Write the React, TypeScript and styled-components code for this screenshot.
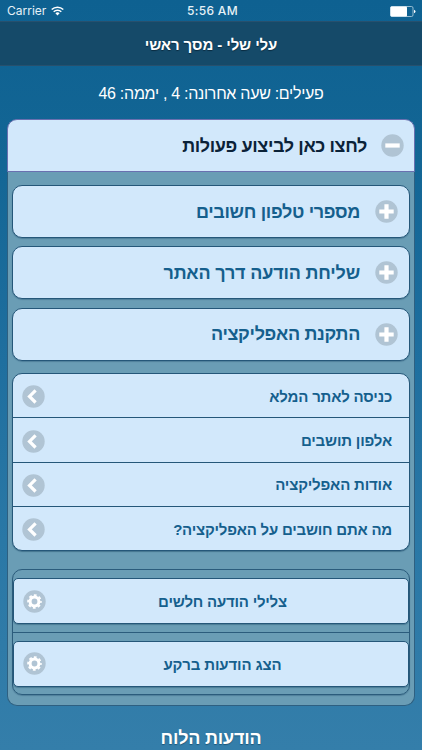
import React from "react";
import styled, { createGlobalStyle } from "styled-components";

const GlobalStyle = createGlobalStyle`
  *, *::before, *::after { box-sizing: border-box; }
  html, body { margin: 0; padding: 0; }
  body { overflow: hidden; }
`;

const Screen = styled.div`
  width: 422px;
  height: 750px;
  overflow: hidden;
  direction: rtl;
  display: flex;
  flex-direction: column;
  font-family: "Liberation Sans", "Open Sans", sans-serif;
  color: #fff;
  background: linear-gradient(#0e6191 0%, #136695 22%, #1f6f9f 48%, #2a78a6 72%, #347eaa 100%);
`;

const StatusBar = styled.div`
  direction: ltr;
  height: 21px;
  flex: none;
  display: grid;
  grid-template-columns: 1fr auto 1fr;
  align-items: center;
  padding: 1px 6px 0 7px;
  font: 12px/20px Inter, sans-serif;
  color: #e6f1f7;
`;

const Carrier = styled.span`
  display: flex;
  align-items: center;
  gap: 5px;
`;

const Clock = styled.span`
  padding-left: 2px;
  font-weight: 500;
  letter-spacing: 0.3px;
`;

const BatterySlot = styled.span`
  display: flex;
  justify-content: flex-end;
`;

const TitleBar = styled.header`
  height: 45px;
  flex: none;
  display: flex;
  align-items: center;
  justify-content: center;
  padding-top: 2px;
  background: #154a69;
  border-top: 1px solid #27506d;
  border-bottom: 1px solid #27506d;
  text-shadow: 0 1px 1px #0a2b40;
`;

const Text = styled.span<{ $size: number; $weight?: number; $spacing?: number }>`
  font-size: ${(p) => p.$size}px;
  font-weight: ${(p) => p.$weight ?? 700};
  letter-spacing: ${(p) => p.$spacing ?? 0}px;
  line-height: 24px;
  white-space: nowrap;
`;

const Activity = styled.div`
  height: 53px;
  flex: none;
  display: flex;
  align-items: center;
  justify-content: center;
  padding-top: 2px;
`;

const Panel = styled.section`
  height: 587px;
  flex: none;
  margin: 0 7px;
  display: flex;
  flex-direction: column;
`;

const PanelHeader = styled.div`
  height: 53px;
  flex: none;
  display: flex;
  align-items: center;
  gap: 14px;
  padding: 0 10px;
  color: #0b2238;
  background: #d2e8fb;
  border: 1px solid #6a70b0;
  border-radius: 10px 10px 0 0;
`;

const PanelBody = styled.div`
  flex: 1;
  display: flex;
  flex-direction: column;
  padding: 13px 4px 0;
  background: #6a9db5;
  border: 1px solid #2e6081;
  border-top: 0;
  border-radius: 0 0 10px 10px;
`;

const Collapsible = styled.div`
  height: 53px;
  flex: none;
  display: flex;
  align-items: center;
  gap: 15px;
  margin-bottom: 8.4px;
  padding: 0 11px;
  color: #155f8d;
  background: #d2e8fb;
  border: 1px solid #255779;
  border-radius: 10px;
  box-shadow: 0 1px 1px rgba(30, 75, 105, 0.35);
`;

const List = styled.div`
  height: 178px;
  flex: none;
  margin-top: 4px;
  display: flex;
  flex-direction: column;
  color: #155f8d;
  background: #d2e8fb;
  border: 1px solid #255779;
  border-radius: 10px;
  box-shadow: 0 1px 1px rgba(30, 75, 105, 0.5);
`;

const ListRow = styled.div`
  flex: 1;
  display: flex;
  align-items: center;
  justify-content: space-between;
  padding: 2px 17px 0 9px;
  & + & { border-top: 1px solid #255779; }
`;

const IconSlot = styled.span`
  display: flex;
  flex: none;
`;

const ButtonGroup = styled.div`
  height: 126px;
  flex: none;
  margin-top: 18px;
  display: flex;
  flex-direction: column;
  border: 1px solid #2b5c7c;
  border-radius: 10px;
  box-shadow: 0 1px 1px rgba(30, 75, 105, 0.35);
`;

const ButtonCell = styled.div`
  flex: 1;
  padding-top: 8px;
  & + & { border-top: 1px solid #2b5c7c; }
`;

const Button = styled.div`
  height: 46px;
  display: grid;
  grid-template-columns: 1fr 23px;
  align-items: center;
  justify-items: center;
  padding: 0 9px;
  color: #155f8d;
  background: #d2e8fb;
  border: 1px solid #255779;
  border-radius: 5px;
  box-shadow: 0 1px 1px rgba(30, 75, 105, 0.4);
`;

const ButtonLabel = styled(Text)`
  padding-top: 2px;
`;

const Footer = styled.div`
  height: 44px;
  flex: none;
  display: flex;
  justify-content: center;
  padding-top: 20px;
  text-shadow: 0 1px 1px #1d5679;
`;

function Disc({ kind }: { kind: "plus" | "minus" | "back" | "gear" }) {
  return (
    <svg width="23" height="23" viewBox="0 0 23 23">
      <circle cx="11.5" cy="11.5" r="11.2" fill="#b0c4d4" />
      {kind === "minus" && <path d="M4.3 11.5h14.4" stroke="#fff" strokeWidth="4.2" />}
      {kind === "plus" && <path d="M4.3 11.5h14.4M11.5 4.3v14.4" stroke="#fff" strokeWidth="4.2" />}
      {kind === "back" && <path d="M13.6 5.3l-6.1 6.1 6.1 6.1" fill="none" stroke="#fff" strokeWidth="3.2" />}
      {kind === "gear" && (
        <g fill="none" stroke="#fff">
          <circle cx="11.5" cy="11.5" r="4.4" strokeWidth="3" />
          <circle cx="11.5" cy="11.5" r="6.4" strokeWidth="1.8" strokeDasharray="2.8 2.2265" strokeDashoffset="1.4" />
        </g>
      )}
    </svg>
  );
}

const collapsibles = [
  { label: "מספרי טלפון חשובים", spacing: -0.33 },
  { label: "שליחת הודעה דרך האתר", spacing: -0.18 },
  { label: "התקנת האפליקציה", spacing: -0.33 },
];

const links = [
  { label: "כניסה לאתר המלא", spacing: -0.2 },
  { label: "אלפון תושבים", spacing: -0.18 },
  { label: "אודות האפליקציה", spacing: -0.18 },
  { label: "מה אתם חושבים על האפליקציה?", spacing: -0.22 },
];

const actions = [
  { label: "צלילי הודעה חלשים", spacing: -0.22 },
  { label: "הצג הודעות ברקע", spacing: -0.13 },
];

export default function App() {
  return (
    <Screen>
      <GlobalStyle />
      <StatusBar>
        <Carrier>
          Carrier
          <svg width="13" height="10" viewBox="0 0 13 10">
            <path d="M.7 3.5a8.3 8.3 0 0 1 11.6 0M2.7 5.7a5.4 5.4 0 0 1 7.6 0" fill="none" stroke="#fff" strokeWidth="1.5" />
            <path d="M4.4 7.3a3 3 0 0 1 4.2 0L6.5 9.6z" fill="#fff" />
          </svg>
        </Carrier>
        <Clock>5:56 AM</Clock>
        <BatterySlot>
          <svg width="26" height="11" viewBox="0 0 26 11">
            <rect x=".5" y=".5" width="22.5" height="10" rx="1.5" fill="none" stroke="#b9d3e2" strokeWidth=".8" />
            <rect x=".5" y=".5" width="16.5" height="10" rx="1" fill="#fff" />
            <path d="M24 3.7q1.5.6 1.5 1.8t-1.5 1.8z" fill="#fff" />
          </svg>
        </BatterySlot>
      </StatusBar>
      <TitleBar><Text $size={15} $spacing={-0.1}>עלי שלי - מסך ראשי</Text></TitleBar>
      <Activity><Text $size={16} $weight={400} $spacing={-0.29}>פעילים: שעה אחרונה: 4 , יממה: 46</Text></Activity>
      <Panel>
        <PanelHeader>
          <IconSlot><Disc kind="minus" /></IconSlot>
          <Text $size={18} $spacing={-0.37}>לחצו כאן לביצוע פעולות</Text>
        </PanelHeader>
        <PanelBody>
          {collapsibles.map((c) => (
            <Collapsible key={c.label}>
              <IconSlot><Disc kind="plus" /></IconSlot>
              <Text $size={18} $spacing={c.spacing}>{c.label}</Text>
            </Collapsible>
          ))}
          <List>
            {links.map((l) => (
              <ListRow key={l.label}>
                <Text $size={15} $spacing={l.spacing}>{l.label}</Text>
                <IconSlot><Disc kind="back" /></IconSlot>
              </ListRow>
            ))}
          </List>
          <ButtonGroup>
            {actions.map((a) => (
              <ButtonCell key={a.label}>
                <Button>
                  <ButtonLabel $size={15} $spacing={a.spacing}>{a.label}</ButtonLabel>
                  <IconSlot><Disc kind="gear" /></IconSlot>
                </Button>
              </ButtonCell>
            ))}
          </ButtonGroup>
        </PanelBody>
      </Panel>
      <Footer><Text $size={18} $spacing={-0.18}>הודעות הלוח</Text></Footer>
    </Screen>
  );
}
